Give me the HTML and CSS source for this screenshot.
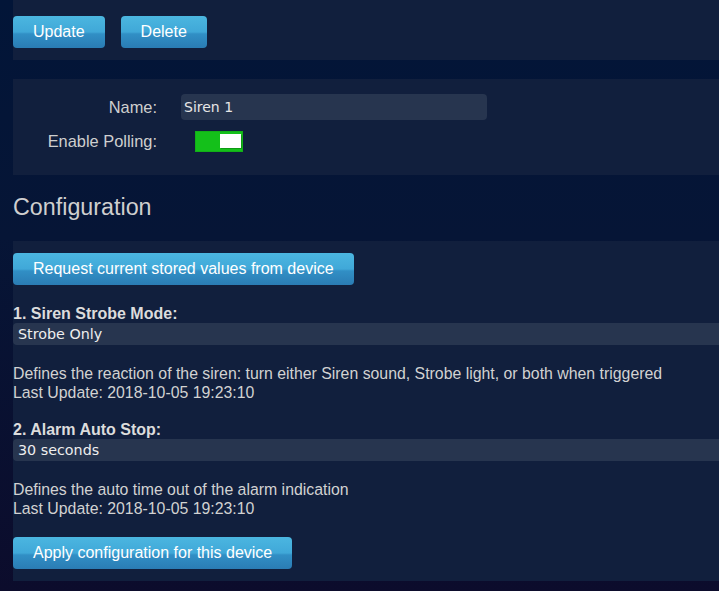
FILE: index.html
```html
<!DOCTYPE html>
<html>
<head>
<meta charset="utf-8">
<link rel="stylesheet" href="styles.css">
</head>
<body>
<div class="page">
  <section class="panel panel-actions">
    <button class="btn">Update</button>
    <button class="btn">Delete</button>
  </section>

  <section class="panel panel-form">
    <div class="form-row">
      <label class="form-label">Name:</label>
      <div class="text-input">Siren 1</div>
    </div>
    <div class="form-row">
      <label class="form-label">Enable Polling:</label>
      <div class="toggle"><span class="toggle-knob"></span></div>
    </div>
  </section>

  <h2 class="section-title">Configuration</h2>

  <section class="panel panel-config">
    <button class="btn">Request current stored values from device</button>

    <div class="param">
      <div class="param-label">1. Siren Strobe Mode:</div>
      <div class="select">Strobe Only</div>
      <p class="param-desc">Defines the reaction of the siren: turn either Siren sound, Strobe light, or both when triggered<br>Last Update: 2018-10-05 19:23:10</p>
    </div>

    <div class="param">
      <div class="param-label">2. Alarm Auto Stop:</div>
      <div class="select">30 seconds</div>
      <p class="param-desc">Defines the auto time out of the alarm indication<br>Last Update: 2018-10-05 19:23:10</p>
    </div>

    <button class="btn btn-apply">Apply configuration for this device</button>
  </section>
</div>
</body>
</html>
```

FILE: styles.css
```css
html, body {
  margin: 0;
  padding: 0;
  height: 100%;
}

body {
  background: linear-gradient(180deg, #021538 0%, #061536 40%, #0c0c2c 100%);
  font-family: "Liberation Sans", Arial, sans-serif;
  color: #d6d6d6;
  overflow: hidden;
}

.page {
  padding-left: 13px;
  display: flex;
  flex-direction: column;
}

.panel {
  background: #111f3d;
}

.panel-actions {
  display: flex;
  gap: 16px;
  padding: 16px 0 12px;
}

.btn {
  display: inline-block;
  height: 32px;
  padding: 0 20px;
  border: none;
  border-radius: 4px;
  background: linear-gradient(180deg, #4bb6e0 0%, #40a8d8 50%, #318fc5 56%, #2a7cb4 100%);
  color: #ffffff;
  font-family: "Liberation Sans", Arial, sans-serif;
  font-size: 16px;
  line-height: 32px;
  cursor: pointer;
  align-self: flex-start;
}

.panel-form {
  margin-top: 19px;
  padding: 15px 0 23px;
  display: flex;
  flex-direction: column;
  gap: 11px;
}

.form-row {
  display: grid;
  grid-template-columns: 144px auto;
  column-gap: 24px;
  align-items: center;
}

.form-label {
  text-align: right;
  font-size: 16.4px;
  color: #cfcfcf;
}

.text-input {
  width: 303px;
  height: 26px;
  padding-left: 3px;
  background: #27354f;
  border-radius: 4px;
  font-family: "DejaVu Sans", sans-serif;
  font-size: 14px;
  line-height: 26px;
  color: #e6e6e6;
}

.toggle {
  position: relative;
  margin-left: 14px;
  width: 48px;
  height: 21px;
  background: #14c01a;
  box-sizing: border-box;
  border: 1px solid #12b018;
}

.toggle-knob {
  position: absolute;
  right: 1px;
  top: 2px;
  width: 21px;
  height: 14px;
  background: #ffffff;
  box-shadow: 1px 1px 0 #0e9a14;
}

.section-title {
  margin: 0;
  padding: 18px 0 20px;
  font-size: 23.3px;
  line-height: 28px;
  font-weight: normal;
  color: #cfcfcf;
}

.panel-config {
  padding: 12px 0 12px;
  display: flex;
  flex-direction: column;
}

.param {
  margin-top: 20px;
}

.param + .param {
  margin-top: 19px;
}

.param-label {
  font-size: 16px;
  line-height: 17px;
  font-weight: bold;
  color: #dcdcdc;
}

.select {
  margin-top: 1px;
  height: 22px;
  padding-left: 5px;
  background: #27354f;
  border-radius: 4px 0 0 4px;
  font-family: "DejaVu Sans", sans-serif;
  font-size: 14.3px;
  line-height: 22px;
  color: #eeeeee;
}

.param-desc {
  margin: 19px 0 0;
  font-size: 15.85px;
  line-height: 19px;
  color: #d2d2d2;
}

.btn-apply {
  margin-top: 19px;
}
```
